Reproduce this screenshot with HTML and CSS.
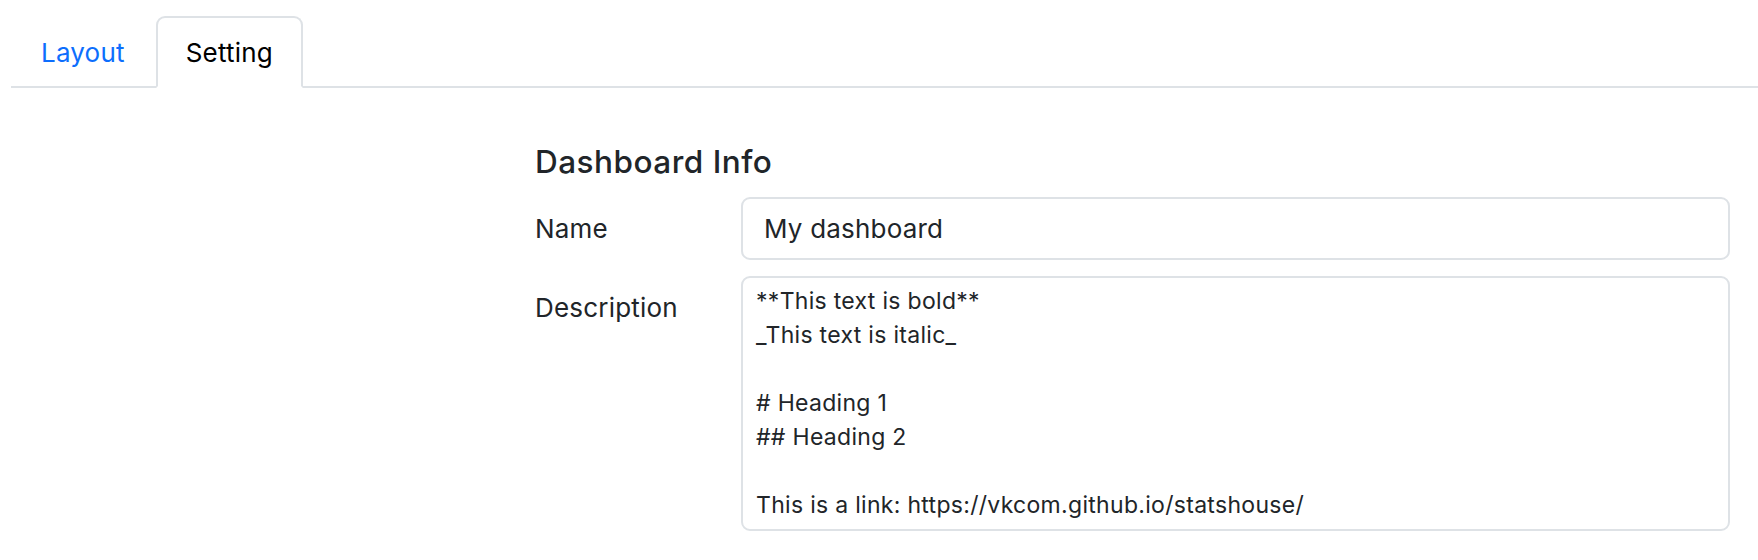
FILE: index.html
```html
<!DOCTYPE html>
<html lang="en">
<head>
<meta charset="utf-8">
<title>Dashboard settings</title>
<link rel="stylesheet" href="styles.css">
</head>
<body>
  <nav class="tabs">
    <a class="tab" href="#layout">Layout</a>
    <a class="tab tab-active" href="#setting">Setting</a>
  </nav>
  <main class="content">
    <h5 class="section-title">Dashboard Info</h5>
    <div class="form-row">
      <label class="form-label" for="name">Name</label>
      <input class="form-input" id="name" type="text" value="My dashboard">
    </div>
    <div class="form-row">
      <label class="form-label" for="desc">Description</label>
      <textarea class="form-textarea" id="desc">**This text is bold**
_This text is italic_

# Heading 1
## Heading 2

This is a link: https://vkcom.github.io/statshouse/</textarea>
    </div>
  </main>
</body>
</html>
```

FILE: styles.css
```css
* {
  box-sizing: border-box;
}

html, body {
  margin: 0;
  background: #fff;
}

body {
  font-family: Inter, "Noto Sans", "Liberation Sans", sans-serif;
  color: #212529;
}

.tabs {
  display: flex;
  align-items: flex-end;
  gap: 1px;
  margin-left: 11px;
  padding-top: 16px;
  border-bottom: 2px solid #dee2e6;
}

.tab {
  display: flex;
  align-items: center;
  height: 72px;
  margin-bottom: -2px;
  padding: 0 28px;
  border: 2px solid transparent;
  border-radius: 9px 9px 0 0;
  font-size: 26px;
  letter-spacing: 0.2px;
  color: #0d6efd;
  text-decoration: none;
}

.tab-active {
  color: #000;
  background: #fff;
  border-color: #dee2e6 #dee2e6 #fff;
}

.content {
  padding: 56px 28px 0 535px;
}

.section-title {
  margin: 0;
  font-size: 31.5px;
  line-height: 36px;
  font-weight: 500;
  letter-spacing: 0.5px;
  color: #212529;
}

.form-row {
  display: grid;
  grid-template-columns: 206px 1fr;
  align-items: start;
  margin-top: 17px;
}

.form-row + .form-row {
  margin-top: 16px;
}

.form-label {
  padding-top: 13px;
  font-size: 26px;
  line-height: 37.5px;
  letter-spacing: 0.2px;
}

.form-input {
  display: block;
  width: 100%;
  height: 63px;
  padding: 0 21px;
  border: 2px solid #dee2e6;
  border-radius: 9px;
  font: inherit;
  font-size: 26px;
  letter-spacing: 0.2px;
  color: #212529;
  background: #fff;
  outline: none;
}

.form-textarea {
  display: block;
  width: 100%;
  height: 255px;
  padding: 6px 13px 7px;
  border: 2px solid #dee2e6;
  border-radius: 9px;
  font: inherit;
  font-size: 23px;
  line-height: 34px;
  letter-spacing: 0.3px;
  color: #212529;
  background: #fff;
  resize: none;
  overflow: hidden;
  outline: none;
}
```
